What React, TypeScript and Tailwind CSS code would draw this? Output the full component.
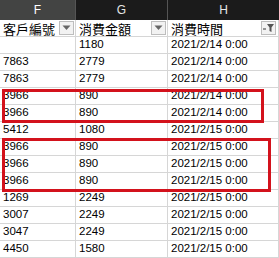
import React from "react";

const rows: [string, string, string][] = [
  ["", "1180", "2021/2/14 0:00"],
  ["7863", "2779", "2021/2/14 0:00"],
  ["7863", "2779", "2021/2/14 0:00"],
  ["3966", "890", "2021/2/14 0:00"],
  ["3966", "890", "2021/2/14 0:00"],
  ["5412", "1080", "2021/2/15 0:00"],
  ["3966", "890", "2021/2/15 0:00"],
  ["3966", "890", "2021/2/15 0:00"],
  ["3966", "890", "2021/2/15 0:00"],
  ["1269", "2249", "2021/2/15 0:00"],
  ["3007", "2249", "2021/2/15 0:00"],
  ["3047", "2249", "2021/2/15 0:00"],
  ["4450", "1580", "2021/2/15 0:00"],
];

function DropBtn({ filter }: { filter?: boolean }) {
  return (
    <div className="w-[15px] h-[14px] bg-[#f2f2f2] border border-[#bdbdbd] flex items-center justify-center shrink-0">
      {filter ? (
        <svg width="12" height="10" viewBox="0 0 12 10">
          <path d="M0 6 L3 6" stroke="#555" strokeWidth="1.2" />
          <path d="M4 1 L11 1 L8.5 4.5 L8.5 9 L6.5 8 L6.5 4.5 Z" fill="#555" />
        </svg>
      ) : (
        <svg width="9" height="6" viewBox="0 0 9 6">
          <path d="M0.5 0.5 L8.5 0.5 L4.5 5 Z" fill="#666" />
        </svg>
      )}
    </div>
  );
}

const cell = "h-[17px] border-r border-b border-[#d6d6d6] pl-[3px] flex items-center text-[11.5px] leading-none text-black";
const cjk = { fontFamily: '"Noto Sans CJK TC", "Liberation Sans", sans-serif' };

export default function App() {
  return (
    <div
      className="relative w-[279px] h-[258px] bg-white overflow-hidden"
      style={{ fontFamily: '"Liberation Sans", Arial, sans-serif' }}
    >
      <div className="grid grid-cols-[76px_92px_1fr]">
        <div className="h-[20px] bg-[#434443] border-r border-[#555] flex items-center justify-center text-white text-[12px]">F</div>
        <div className="h-[20px] bg-[#1b1b1b] border-r border-[#555] flex items-center justify-center text-[#e6e6e6] text-[12px]">G</div>
        <div className="h-[20px] bg-[#1b1b1b] flex items-center justify-center text-[#e6e6e6] text-[12px]">H</div>

        <div className={cell + " justify-between pr-[1px]"}>
          <span className="text-[13px]" style={cjk}>客戶編號</span>
          <DropBtn />
        </div>
        <div className={cell + " justify-between pr-[1px]"}>
          <span className="text-[13px]" style={cjk}>消費金額</span>
          <DropBtn />
        </div>
        <div className={cell + " justify-between pr-[2px]"}>
          <span className="text-[13px]" style={cjk}>消費時間</span>
          <DropBtn filter />
        </div>

        {rows.map((r, i) => (
          <React.Fragment key={i}>
            <div className={cell}>{r[0]}</div>
            <div className={cell}>{r[1]}</div>
            <div className={cell}>{r[2]}</div>
          </React.Fragment>
        ))}
      </div>

      <div className="absolute left-[2px] top-[89px] w-[262px] h-[34px] border-[3px] border-[#d3121c]" />
      <div className="absolute left-[2px] top-[138px] w-[269px] h-[54px] border-[3px] border-[#d3121c]" />
    </div>
  );
}
